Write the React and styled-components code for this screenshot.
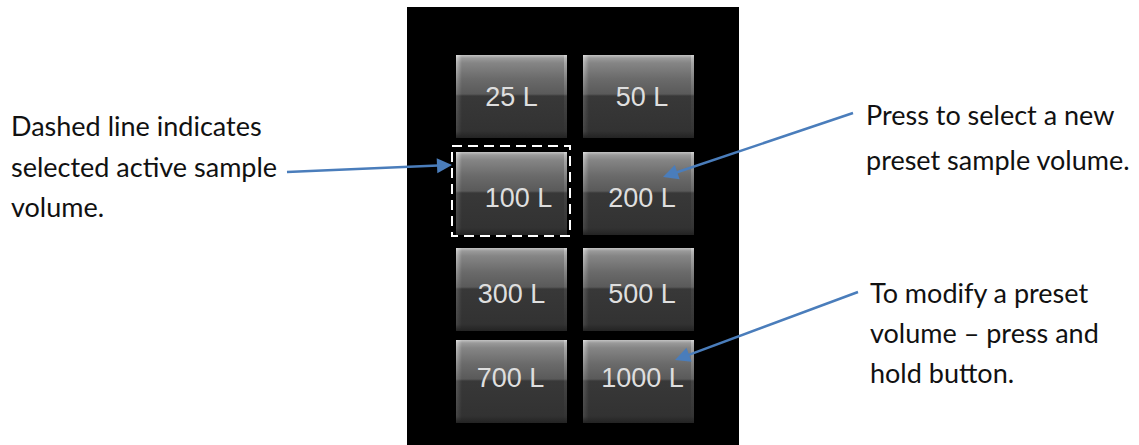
import React from 'react';
import styled, { createGlobalStyle } from 'styled-components';

const GlobalStyle = createGlobalStyle`
  html, body {
    margin: 0;
    padding: 0;
    background: #fff;
  }
  body {
    font-family: Lato, "Noto Sans", sans-serif;
  }
`;

const Page = styled.div`
  position: relative;
  display: flex;
  width: 1139px;
  height: 445px;
  overflow: hidden;
  background: #fff;
`;

const LeftNote = styled.div`
  width: 407px;
  flex: none;
  box-sizing: border-box;
  padding: 106px 0 0 11px;
`;

const Caption = styled.p`
  margin: ${(p) => p.$top || 0}px 0 0 ${(p) => p.$left || 0}px;
  font-family: Lato, "Noto Sans", sans-serif;
  font-size: 27px;
  line-height: ${(p) => p.$lh}px;
  color: #111;
  white-space: nowrap;
`;

const Panel = styled.div`
  width: 332px;
  flex: none;
  margin-top: 7px;
  box-sizing: border-box;
  padding: 48px 0 0 49px;
  background: #000;
  display: flex;
  flex-direction: column;
`;

const ButtonRow = styled.div`
  display: flex;
  gap: 16px;
  margin-top: ${(p) => p.$top}px;
`;

const Slot = styled.div`
  position: relative;
  width: 111px;
  height: 83px;
`;

const PresetButton = styled.button`
  position: relative;
  width: 100%;
  height: 100%;
  margin: 0;
  padding: ${(p) => p.$top}px 0 0;
  border: 0;
  display: flex;
  align-items: flex-start;
  justify-content: center;
  background: linear-gradient(
    to bottom,
    #c2c2c2 0,
    #9a9a9a 3px,
    #858585 8px,
    #6a6a6a 24px,
    #5a5a5a 39px,
    #383838 41px,
    #323232 76px,
    #232323 83px
  );
  overflow: hidden;
  cursor: pointer;

  &::before {
    content: '';
    position: absolute;
    left: 0;
    top: 0;
    bottom: 0;
    width: 6px;
    background: linear-gradient(
      to bottom,
      rgba(255, 255, 255, 0.5),
      rgba(255, 255, 255, 0.18) 45%,
      rgba(255, 255, 255, 0.1) 92%,
      rgba(255, 255, 255, 0)
    );
    -webkit-mask: linear-gradient(to right, #000, transparent);
    mask: linear-gradient(to right, #000, transparent);
  }

  &::after {
    content: '';
    position: absolute;
    right: 0;
    top: 0;
    bottom: 0;
    width: 3px;
    background: linear-gradient(
      to bottom,
      rgba(255, 255, 255, 0.3),
      rgba(255, 255, 255, 0.06) 50%,
      rgba(255, 255, 255, 0)
    );
  }
`;

const Label = styled.span`
  margin-left: ${(p) => p.$shift * 2}px;
  font-family: "Liberation Sans", Arial, sans-serif;
  font-size: 27px;
  line-height: 27px;
  color: #dedede;
  white-space: nowrap;
`;

const Selection = styled.svg`
  position: absolute;
  left: -5px;
  top: -7px;
  width: 120px;
  height: 92px;
  pointer-events: none;
`;

const RightNotes = styled.div`
  flex: 1;
  display: flex;
  flex-direction: column;
  padding: 92px 0 0 127px;
`;

const ArrowLayer = styled.svg`
  position: absolute;
  left: 0;
  top: 0;
  width: 1139px;
  height: 445px;
  pointer-events: none;
`;

const rows = [
  {
    top: 0,
    items: [
      { label: '25 L', top: 29, shift: 0 },
      { label: '50 L', top: 29, shift: 3.5 },
    ],
  },
  {
    top: 14,
    items: [
      { label: '100 L', top: 33, shift: 7, selected: true },
      { label: '200 L', top: 33, shift: 3.5 },
    ],
  },
  {
    top: 13,
    items: [
      { label: '300 L', top: 33, shift: 0 },
      { label: '500 L', top: 33, shift: 3.5 },
    ],
  },
  {
    top: 9,
    items: [
      { label: '700 L', top: 25, shift: -1 },
      { label: '1000 L', top: 25, shift: 4 },
    ],
  },
];

const arrows = [
  { from: [287, 172], to: [452, 165] },
  { from: [853, 113], to: [663, 177] },
  { from: [858, 292], to: [675, 360] },
];

const ARROW = '#4a7dbb';

const Arrow = ({ from, to }) => {
  const [x1, y1] = from;
  const [x2, y2] = to;
  const d = Math.hypot(x2 - x1, y2 - y1);
  const ux = (x2 - x1) / d;
  const uy = (y2 - y1) / d;
  const len = 15;
  const half = 7.5;
  const bx = x2 - ux * len;
  const by = y2 - uy * len;
  const pts = [
    [x2, y2],
    [bx - uy * half, by + ux * half],
    [bx + uy * half, by - ux * half],
  ]
    .map((p) => p.join(','))
    .join(' ');

  return (
    <g>
      <line
        x1={x1}
        y1={y1}
        x2={bx + ux}
        y2={by + uy}
        stroke={ARROW}
        strokeWidth="2.5"
      />
      <polygon points={pts} fill={ARROW} />
    </g>
  );
};

const App = () => (
  <>
    <GlobalStyle />
    <Page>
      <LeftNote>
        <Caption $lh={40.5}>
          Dashed line indicates
          <br />
          selected active sample
          <br />
          volume.
        </Caption>
      </LeftNote>

      <Panel>
        {rows.map((row, r) => (
          <ButtonRow key={r} $top={row.top}>
            {row.items.map((item) => (
              <Slot key={item.label}>
                <PresetButton $top={item.top}>
                  <Label $shift={item.shift}>{item.label}</Label>
                </PresetButton>
                {item.selected && (
                  <Selection viewBox="0 0 120 92">
                    <rect
                      x="1"
                      y="1"
                      width="118"
                      height="90"
                      fill="none"
                      stroke="#fff"
                      strokeWidth="2"
                      strokeDasharray="10 6"
                    />
                  </Selection>
                )}
              </Slot>
            ))}
          </ButtonRow>
        ))}
      </Panel>

      <RightNotes>
        <Caption $lh={45}>
          Press to select a new
          <br />
          preset sample volume.
        </Caption>
        <Caption $lh={40} $top={91} $left={4}>
          To modify a preset
          <br />
          volume – press and
          <br />
          hold button.
        </Caption>
      </RightNotes>

      <ArrowLayer viewBox="0 0 1139 445">
        {arrows.map((a, i) => (
          <Arrow key={i} from={a.from} to={a.to} />
        ))}
      </ArrowLayer>
    </Page>
  </>
);

export default App;
